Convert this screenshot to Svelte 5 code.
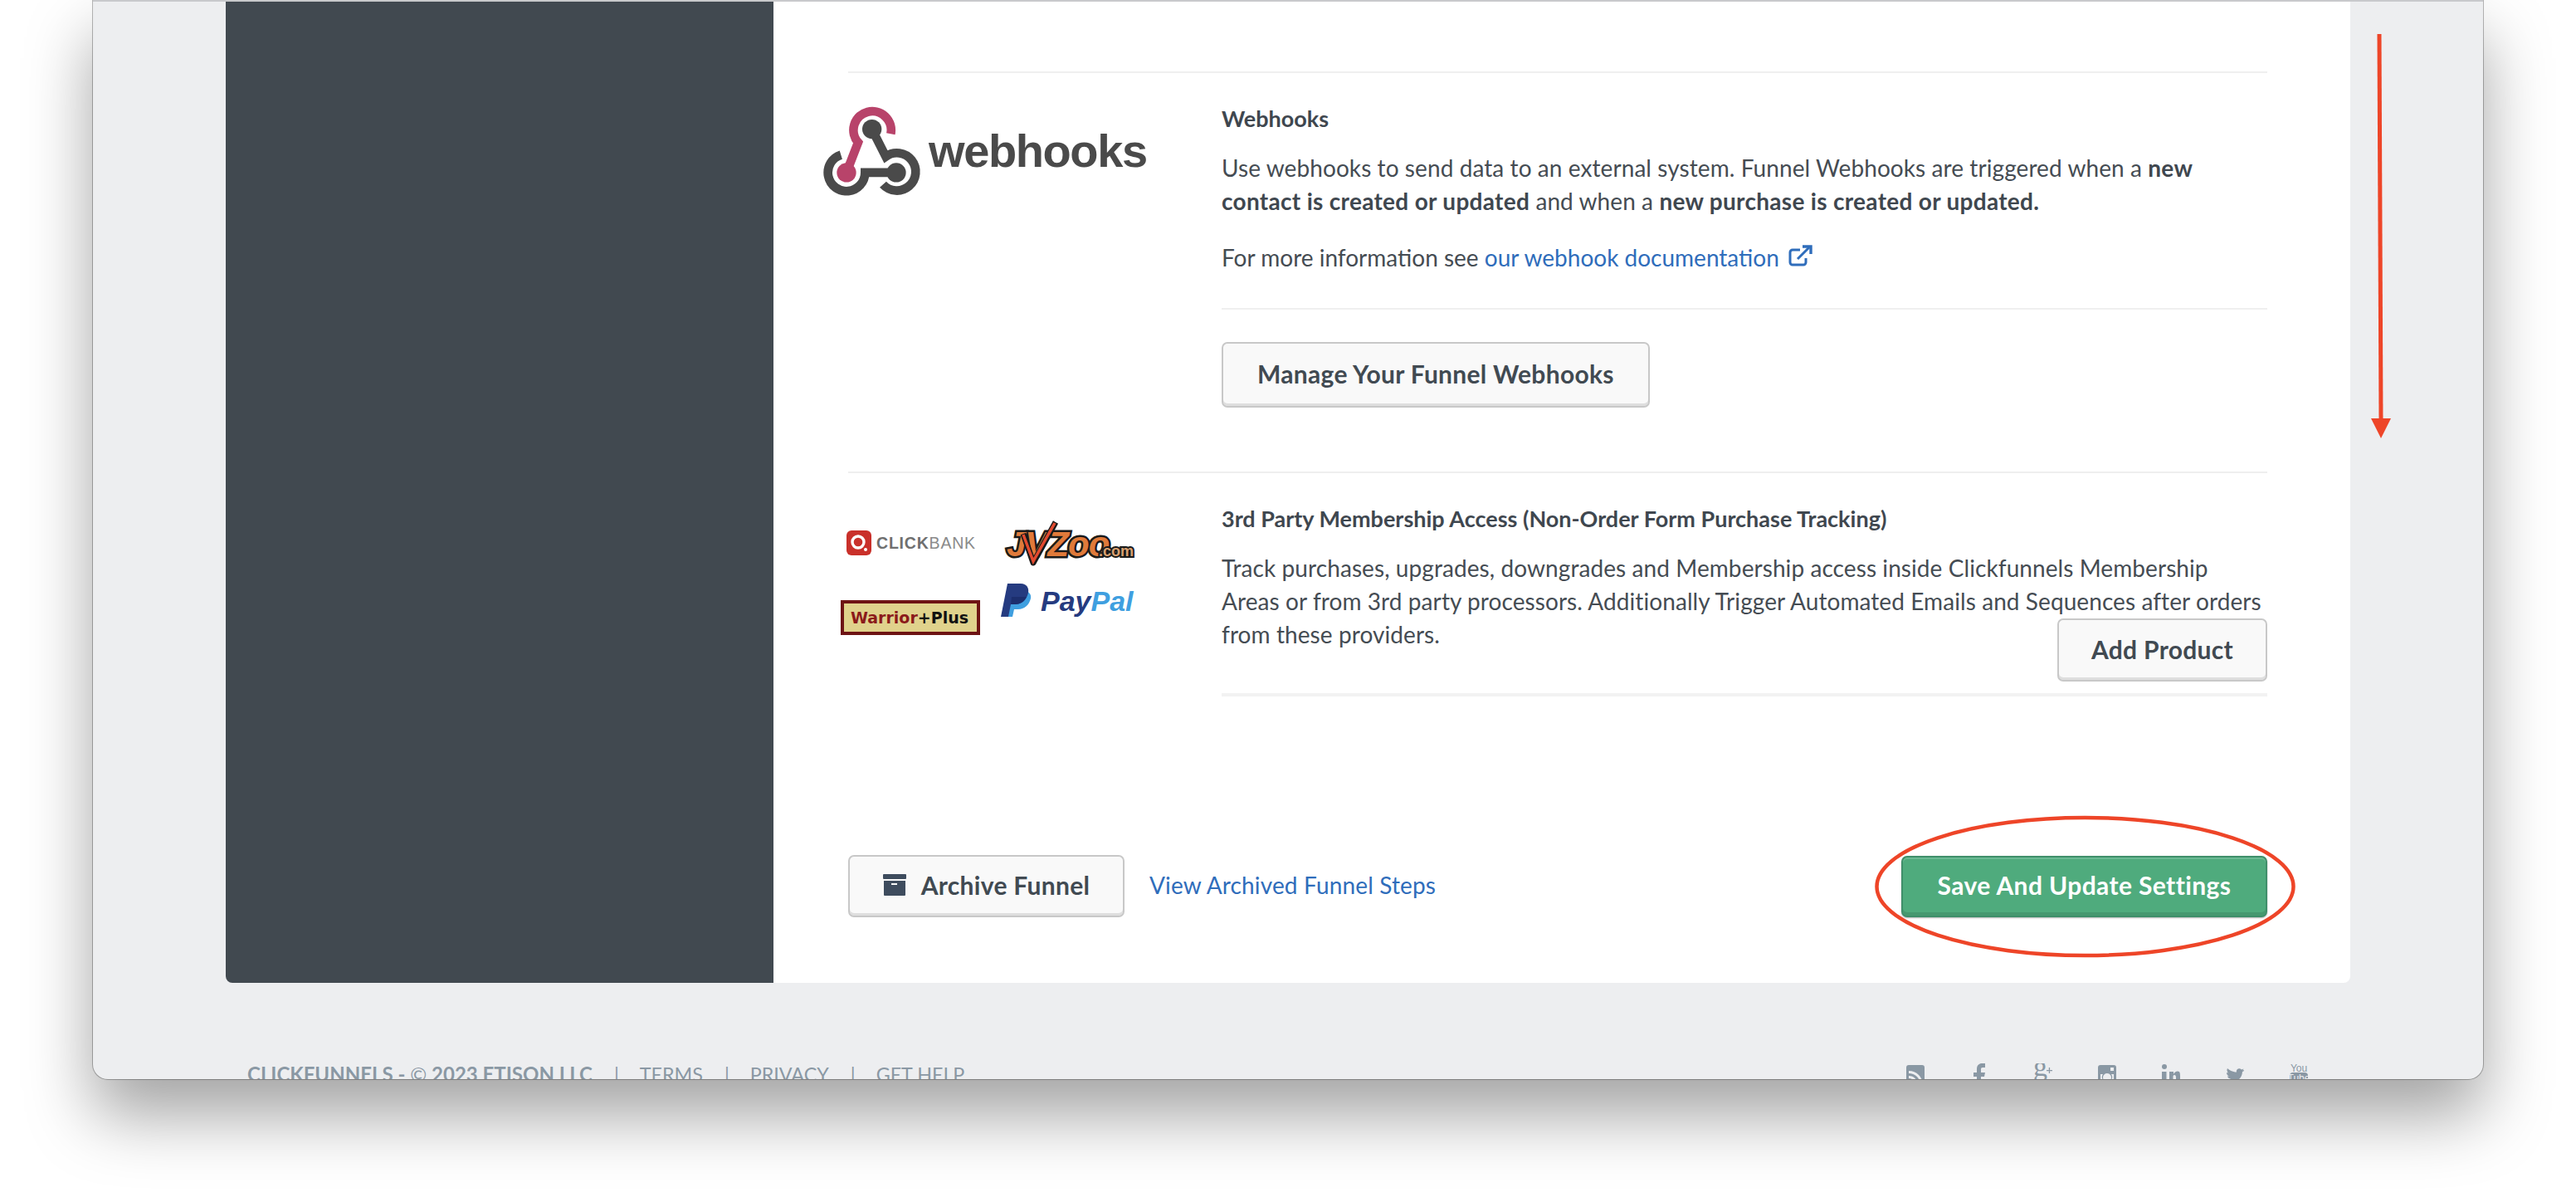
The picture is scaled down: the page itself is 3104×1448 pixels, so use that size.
<script lang="ts">
	const social = ['rss', 'facebook', 'google', 'instagram', 'linkedin', 'twitter', 'youtube'];
</script>

<div class="page">
	<div class="window">
		<div class="card">
			<aside class="sidebar"></aside>
			<main class="main">
				<section class="row">
					<div class="logo">
						<svg class="webhooks-logo" width="400" height="120" viewBox="0 0 400 120" role="img" aria-label="webhooks">
							<g transform="translate(-32 -68.4) scale(.3333)" fill="none" stroke-width="32">
								<path d="M340 305A68 68 0 1 0 222 336L180 445" stroke="#b8436a" />
								<circle cx="180" cy="445" r="35" fill="#b8436a" stroke="none" />
								<path d="M272 288L322 387A68 68 0 1 1 312 488" stroke="#4a4a4a" />
								<path d="M160 381A67 67 0 1 0 247 445H360" stroke="#4a4a4a" />
								<circle cx="272" cy="288" r="35" fill="#4a4a4a" stroke="none" />
								<circle cx="360" cy="445" r="35" fill="#4a4a4a" stroke="none" />
							</g>
							<text x="127" y="73" class="webhooks-word">webhooks</text>
						</svg>
					</div>
					<div class="copy">
						<h3>Webhooks</h3>
						<p class="lead">
							Use webhooks to send data to an external system. Funnel Webhooks are triggered when a <b>new contact is created or updated</b> and when a <b>new purchase is created or updated.</b>
						</p>
						<p class="more">
							For more information see <a href="#docs">our webhook documentation</a>
							<svg class="ext" width="30" height="26" viewBox="0 0 30 26" fill="none" stroke="#2f6dbb" stroke-width="3">
								<path d="M14 6H5a3 3 0 0 0-3 3v12a3 3 0 0 0 3 3h13a3 3 0 0 0 3-3v-5" />
								<path d="M11 17L25 3" />
								<path d="M17 2h10v9" stroke-width="3.4" />
							</svg>
						</p>
						<hr class="rule" />
						<button class="btn">Manage Your Funnel Webhooks</button>
					</div>
				</section>

				<section class="row second">
					<div class="logo">
						<svg class="partner-logos" width="380" height="160" viewBox="0 0 380 160" role="img" aria-label="Partner logos">
							<!-- clickbank -->
							<rect x="12" y="18" width="30" height="30" rx="6" fill="#c9302a" />
							<circle cx="26" cy="32" r="7" fill="none" stroke="#fff" stroke-width="3.4" />
							<circle cx="35" cy="41" r="2" fill="#fff" />
							<circle cx="39" cy="45" r="1.6" fill="#c9302a" />
							<text x="48" y="39.500" class="cb"><tspan font-weight="700" fill="#6f6f6f">CLICK</tspan><tspan fill="#8a8a8a">BANK</tspan></text>

							<!-- jvzoo -->
							<text x="205" y="49" class="jv">JVZoo</text>
							<text x="316" y="49" class="jv-com">.com</text>
							<path d="M225 22L237 57L264 8" fill="none" stroke="#1a1a1a" stroke-width="7" stroke-linejoin="round" />
							<path d="M225 23L237 55L263 9" fill="none" stroke="#e24a2f" stroke-width="3.5" />

							<!-- warrior plus -->
							<rect x="7" y="104" width="164" height="38" fill="#e0d28c" stroke="#6e1414" stroke-width="4" />
							<text x="17" y="130" class="wp"><tspan fill="#8b1a1a">Warrior</tspan><tspan fill="#111">+Plus</tspan></text>

							<!-- paypal -->
							<path d="M214 91h12c6 0 9 4 8 9-2 8-8 13-15 13h-5l-2 9h-11z" fill="#3f9fe0" />
							<path d="M206 82h16c7 0 10 5 9 11-2 9-8 14-16 14h-5l-3 15h-9z" fill="#253b80" />
							<path d="M211 98h18c-3 6-8 9-14 9h-5z" fill="#1c2f6e" />
							<text x="246" y="115" class="pp"><tspan fill="#253b80">Pay</tspan><tspan fill="#3f9fe0">Pal</tspan></text>
						</svg>
					</div>
					<div class="copy">
						<h3>3rd Party Membership Access (Non-Order Form Purchase Tracking)</h3>
						<p class="lead">
							Track purchases, upgrades, downgrades and Membership access inside Clickfunnels Membership Areas or from 3rd party processors. Additionally Trigger Automated Emails and Sequences after orders from these providers.
						</p>
						<div class="add-wrap"><button class="btn add">Add Product</button></div>
						<hr class="rule thick" />
					</div>
				</section>

				<div class="actions">
					<button class="btn archive">
						<svg width="28" height="26" viewBox="0 0 28 26" fill="#3e4c5e">
							<rect width="28" height="6" rx="1" />
							<path d="M1 8h26v17a1 1 0 0 1-1 1H2a1 1 0 0 1-1-1zM10 11v2h7v-2z" fill-rule="evenodd" />
						</svg>
						Archive Funnel
					</button>
					<a class="archived" href="#archived">View Archived Funnel Steps</a>
					<button class="btn save">Save And Update Settings</button>
				</div>
			</main>
		</div>

		<footer class="foot">
			<div class="foot-links">
				<strong>CLICKFUNNELS - <span class="copyright">©</span> 2023 ETISON LLC</strong>
				<span class="sep">|</span><span>TERMS</span>
				<span class="sep">|</span><span>PRIVACY</span>
				<span class="sep">|</span><span>GET HELP</span>
			</div>
			<div class="foot-social">
				{#each social as name}
					<svg width="22" height="34" viewBox="0 0 22 34" fill="#8a98a4" aria-label={name}>
						{#if name === 'rss'}
							<path fill-rule="evenodd" d="M3 2h16a3 3 0 0 1 3 3v26H0V5a3 3 0 0 1 3-3zM3 9v3a14 14 0 0 1 14 14h3A17 17 0 0 0 3 9zm0 6v3a8 8 0 0 1 8 8h3A11 11 0 0 0 3 15zm2.500 6a2.500 2.500 0 1 0 0 5 2.500 2.500 0 0 0 0-5z" />
						{:else if name === 'facebook'}
							<path d="M8 34V16H4v-5h4V7c0-5 3-7 6-7h4v5h-3c-1.500 0-2 .8-2 2v4h5l-1 5h-4v18z" />
						{:else if name === 'google'}
							<text x="-1" y="15" class="gplus">g</text>
							<path d="M15 8h7v1.300h-7zM17.800 5h1.300v7h-1.300z" />
						{:else if name === 'instagram'}
							<path fill-rule="evenodd" d="M3 2h16a3 3 0 0 1 3 3v29H0V5a3 3 0 0 1 3-3zM15 5v4h4V5zM3 13v18h16V13h-3a6 6 0 1 1-10 0zm8-1a5 5 0 1 0 0 10 5 5 0 0 0 0-10z" />
						{:else if name === 'linkedin'}
							<circle cx="3" cy="4" r="3" />
							<path d="M0 10h5.500v24H0zM9 10h5v3c1-2 3-3.500 5-3.500 3 0 3 3 3 6V34h-5V17c0-2-.5-3-2-3s-1.500 1.500-1.500 3v17H9z" />
						{:else if name === 'twitter'}
							<path d="M20 8c1 0 2-1 2-2l-2 .5c1-.5 1.500-2 1.500-2l-2.500 1c-3-3-7-.5-6 3C8 8.500 4 6 2 4c-1 2-.5 4 1 5.500L1 9c0 2 1 3.500 3 4.500H2c.5 1.800 2 3 4 3-1.500 1-3.500 1.500-5.500 1.500 8 5 19 1 19.500-10z" transform="translate(0 2)" />
							<path d="M7 20l3 13h2l2-13z" />
						{:else}
							<text x="11" y="9.500" class="yt">You</text>
							<rect x="0" y="11" width="22" height="23" rx="4" />
							<text x="11" y="22" class="yt tube">Tube</text>
						{/if}
					</svg>
				{/each}
			</div>
		</footer>
	</div>

	<svg class="marks" width="3104" height="1448" viewBox="0 0 3104 1448" fill="none" aria-hidden="true">
		<ellipse cx="2512.500" cy="1068" rx="251" ry="83" stroke="#ee4528" stroke-width="4.500" />
		<path d="M2867 41L2869 506" stroke="#ee4528" stroke-width="5" />
		<path d="M2857 504H2881L2869 528z" fill="#ee4528" />
	</svg>
</div>

<style>
	:global(body) {
		background: #fff;
	}

	.page {
		position: relative;
		width: 3104px;
		height: 1448px;
		overflow: hidden;
		font-family: Lato, 'Open Sans', sans-serif;
		font-size: 28px;
		color: #454c53;
	}

	.window {
		width: 2880px;
		height: 1300px;
		margin-left: 112px;
		box-sizing: border-box;
		border-top: 2px solid #c8c9cc;
		border-radius: 0 0 18px 18px;
		background: #edeef0;
		box-shadow:
			0 0 0 1px rgba(0, 0, 0, 0.28),
			0 44px 80px rgba(0, 0, 0, 0.36);
		overflow: hidden;
	}

	.card {
		display: flex;
		width: 2560px;
		height: 1182px;
		margin-left: 160px;
	}

	.sidebar {
		flex: none;
		width: 660px;
		background: #414950;
		border-radius: 0 0 0 8px;
	}

	.main {
		flex: 1;
		min-width: 0;
		padding: 84px 100px 0 90px;
		background: #fff;
		border-radius: 0 0 8px 0;
	}

	.row {
		display: grid;
		grid-template-columns: 450px 1fr;
		padding-top: 35px;
		border-top: 2px solid #efefef;
	}

	.second {
		margin-top: 77px;
	}

	.logo {
		min-width: 0;
	}

	.webhooks-logo {
		display: block;
		margin: 5px 0 0 -30px;
	}

	.webhooks-word {
		font: 700 56px 'Liberation Sans', Arial, sans-serif;
		letter-spacing: -1.4px;
		fill: #4a4a4a;
	}

	.partner-logos {
		display: block;
		margin: 16px 0 0 -14px;
	}

	.cb {
		font: 400 19.500px 'Liberation Sans', Arial, sans-serif;
		letter-spacing: 0.8px;
	}

	.jv {
		font: italic 700 42px 'Liberation Sans', Arial, sans-serif;
		letter-spacing: -1px;
		fill: #e07a3a;
		stroke: #1a1a1a;
		stroke-width: 5px;
		paint-order: stroke;
	}

	.jv-com {
		font: 700 18px 'Liberation Sans', Arial, sans-serif;
		fill: #d9a070;
		stroke: #1a1a1a;
		stroke-width: 4px;
		paint-order: stroke;
	}

	.wp {
		font: 700 19px 'DejaVu Sans', sans-serif;
	}

	.pp {
		font: italic 700 34px 'Liberation Sans', Arial, sans-serif;
	}

	.gplus {
		font: 400 34px 'Liberation Serif', serif;
	}

	.yt {
		font: 400 12px 'Liberation Sans', Arial, sans-serif;
		text-anchor: middle;
	}

	.tube {
		fill: #edeef0;
	}

	h3 {
		margin: 0;
		font-size: 27px;
		line-height: 40px;
		font-weight: 700;
		color: #3f474f;
	}

	p {
		margin: 0;
		line-height: 40px;
	}

	.lead {
		margin-top: 19px;
		letter-spacing: 0.08px;
	}

	.lead b {
		color: #3f474f;
		letter-spacing: 0.3px;
	}

	.more {
		margin-top: 28px;
	}

	a {
		color: #2f6dbb;
		text-decoration: none;
	}

	.ext {
		margin-left: 4px;
		vertical-align: 0;
	}

	.rule {
		height: 2px;
		margin: 41px 0 39px;
		border: 0;
		background: #efefef;
	}

	.rule.thick {
		height: 4px;
		margin: 14px 0 0;
		background: #f2f2f2;
	}

	.btn {
		display: inline-flex;
		align-items: center;
		justify-content: center;
		gap: 18px;
		box-sizing: border-box;
		height: 79px;
		padding: 0 41px 3px;
		border: 2px solid #c8c8c8;
		border-radius: 7px;
		background: #f9f9f9;
		box-shadow: inset 0 -3px 0 #dedede;
		font: 700 30px Lato, 'Open Sans', sans-serif;
		letter-spacing: 0.3px;
		color: #414a52;
	}

	.add-wrap {
		display: flex;
		justify-content: flex-end;
		margin-top: -39px;
	}

	.add {
		width: 253px;
		height: 76px;
		padding: 0 0 3px;
	}

	.actions {
		display: flex;
		align-items: center;
		margin-top: 191px;
	}

	.archive {
		width: 333px;
		height: 75px;
		padding: 0 0 3px;
	}

	.archived {
		margin: -3px 0 0 30px;
		letter-spacing: 0.15px;
	}

	.save {
		width: 441px;
		height: 74px;
		margin-left: auto;
		padding: 0 0 3px;
		border-color: #3f8f6a;
		background: #4fab7d;
		box-shadow:
			inset 0 2px 0 #6ab993,
			inset 0 -4px 0 #46986f,
			0 1px 2px rgba(0, 0, 0, 0.3);
		color: #fff;
		letter-spacing: 0.4px;
	}

	.foot {
		display: flex;
		justify-content: space-between;
		align-items: flex-start;
		margin: 97px 211px 0 186px;
		font-size: 23.300px;
		line-height: 30px;
		color: #8a98a4;
	}

	.foot-links {
		display: flex;
		margin-top: -2px;
	}

	.foot-links strong {
		font-weight: 700;
		font-size: 24px;
	}

	.copyright {
		font-weight: 400;
	}

	.sep {
		margin: 0 25px 0 26px;
	}

	.foot-social {
		display: flex;
		gap: 55px;
	}

	.foot-social svg {
		display: block;
		flex: none;
	}

	.marks {
		position: absolute;
		top: 0;
		left: 0;
		pointer-events: none;
	}
</style>
